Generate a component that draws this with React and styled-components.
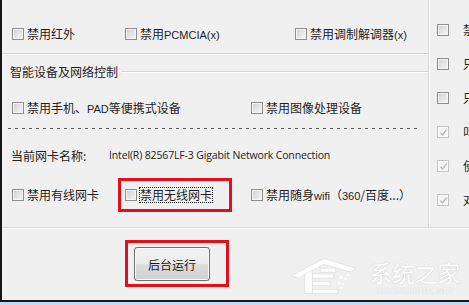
import React from "react";
import styled, { createGlobalStyle } from "styled-components";

const GlobalStyle = createGlobalStyle`
  html, body {
    margin: 0;
    padding: 0;
    background: #f0f0f0;
    overflow: hidden;
  }
  body {
    font-family: "Noto Sans CJK SC", "Liberation Sans", sans-serif;
    font-size: 12px;
    color: #1e1e1e;
  }
`;

const Page = styled.div`
  width: 469px;
  height: 305px;
  display: flex;
  flex-direction: column;
  overflow: hidden;
`;

const Window = styled.div`
  position: relative;
  height: 302px;
  box-sizing: border-box;
  border-left: 2px solid #161616;
  border-bottom: 2px solid #161616;
  background: #f0f0f0;
  display: flex;
  flex-direction: column;
`;

const Taskbar = styled.div`
  height: 3px;
  background: #c6dbf1;
`;

const Main = styled.div`
  display: flex;
  height: 227px;
  border-bottom: 1px solid #d9d9d9;
  box-shadow: 0 1px 0 #ffffff;
`;

const LeftPanel = styled.div`
  width: 426px;
  border-right: 1px solid #d9d9d9;
  box-shadow: 1px 0 0 #ffffff;
  display: flex;
  flex-direction: column;
`;

const RightPanel = styled.div`
  flex: 1;
  padding: 23px 0 0 8px;
  display: flex;
  flex-direction: column;
  gap: 20px;
  white-space: nowrap;
  overflow: hidden;
`;

const Row = styled.div`
  display: grid;
  grid-template-columns: ${(p) => p.$cols};
  align-items: center;
  height: 14px;
  padding-left: 10px;
  margin-top: ${(p) => p.$top}px;
`;

const Etched = styled.div`
  height: 1px;
  background: #d5d5d5;
  border-bottom: 1px solid #ffffff;
  margin-top: ${(p) => p.$top || 0}px;
`;

const GroupHeader = styled.div`
  display: flex;
  align-items: center;
  height: 14px;
  margin-top: 10px;
  padding-left: 8px;
`;

const GroupTitle = styled.span`
  line-height: 14px;
  white-space: nowrap;
`;

const GroupLine = styled.div`
  flex: 1;
  height: 1px;
  margin: -1px 0 0 3px;
  background: #d5d5d5;
  border-bottom: 1px solid #ffffff;
`;

const Dashed = styled.div`
  height: 1px;
  margin: 13px 8px 0 6px;
  background: repeating-linear-gradient(
    to right,
    #5a5a5a 0,
    #5a5a5a 3px,
    transparent 3px,
    transparent 7px
  );
`;

const InfoRow = styled.div`
  display: flex;
  align-items: center;
  height: 14px;
  margin-top: 19px;
  padding-left: 9px;
`;

const InfoLabel = styled.span`
  width: 98px;
  color: #222;
`;

const InfoValue = styled.span`
  font-family: "Open Sans", "Liberation Sans", sans-serif;
  font-size: 10.5px;
  letter-spacing: -0.15px;
  color: #222;
  white-space: nowrap;
`;

const Item = styled.label`
  position: relative;
  display: inline-flex;
  align-items: center;
  gap: ${(p) => p.$gap}px;
  height: 14px;
  white-space: nowrap;
  line-height: 14px;

  ${(p) =>
    p.$marked &&
    `
    &::after {
      content: "";
      position: absolute;
      left: -7px;
      top: -10px;
      width: 108px;
      height: 28px;
      border: 3px solid #e3101b;
    }
  `}
`;

const Box = styled.span`
  flex: none;
  width: 10px;
  height: 10px;
  border: 1px solid ${(p) => (p.$disabled ? "#c4c4c4" : "#8e8e8e")};
  background: ${(p) =>
    p.$disabled
      ? "#f4f4f4"
      : "linear-gradient(135deg, #cfcfcf 0%, #e6e6e6 55%, #f6f6f6 100%)"};
  box-shadow: inset 0 0 0 1px ${(p) => (p.$disabled ? "#fbfbfb" : "#f4f4f4")};
  display: flex;
  align-items: center;
  justify-content: center;
`;

const Text = styled.span`
  outline: ${(p) => (p.$focus ? "1px dotted #202020" : "none")};
  outline-offset: 0;
`;

const Latin = styled.span`
  font-family: "Liberation Sans", sans-serif;
  font-size: 11px;
`;

const Footer = styled.div`
  flex: 1;
  padding: 19px 0 0 132px;
`;

const Marked = styled.div`
  position: relative;
  display: inline-block;

  &::after {
    content: "";
    position: absolute;
    left: -9px;
    top: -7px;
    width: 98px;
    height: 41px;
    border: 3px solid #e3101b;
  }
`;

const Button = styled.button`
  width: 76px;
  height: 34px;
  border: 1px solid #707070;
  border-radius: 3px;
  background: linear-gradient(#f3f3f3 0%, #ececec 48%, #dddddd 52%, #d0d0d0 100%);
  box-shadow: inset 0 0 0 1px #fcfcfc;
  font-family: "Noto Sans CJK SC", sans-serif;
  font-size: 12px;
  color: #1a1a1a;
  padding: 0;
`;

const Watermark = styled.div`
  position: absolute;
  right: 9px;
  bottom: 4px;
  display: flex;
  align-items: flex-end;
  gap: 10px;
  opacity: 0.95;
  pointer-events: none;
`;

const MarkText = styled.div`
  display: flex;
  flex-direction: column;
  align-items: center;
`;

const MarkTitle = styled.span`
  display: block;
  font-size: 23px;
  line-height: 30px;
  height: 30px;
  color: #ffffff;
  letter-spacing: -0.3px;
  text-shadow: 0 0 1px rgba(160, 160, 160, 0.7);
`;

const MarkSub = styled.span`
  display: block;
  font-family: "Liberation Serif", serif;
  font-size: 8px;
  line-height: 9px;
  color: #ffffff;
  letter-spacing: 0.3px;
  text-shadow: 0 0 1px rgba(160, 160, 160, 0.7);
`;

const Check = ({ children, checked, disabled, focus, marked, gap = 3 }) => (
  <Item $marked={marked} $gap={gap}>
    <Box $disabled={disabled}>
      {checked && (
        <svg width="9" height="9" viewBox="0 0 9 9">
          <path d="M1.5 4.8 L3.6 7 L7.6 1.6" fill="none" stroke="#b9b9b9" strokeWidth="1.3" />
        </svg>
      )}
    </Box>
    {children && <Text $focus={focus}>{children}</Text>}
  </Item>
);

const HouseLogo = () => (
  <svg width="68" height="40" viewBox="0 0 70 40">
    <g fill="#ffffff" stroke="rgba(170,170,170,0.45)" strokeWidth="0.5">
      <path d="M0 20 L34 2 L66 12 L62 16 L34 8 L8 22 Z" />
      <path d="M14 18 L22 14 L22 38 L14 38 Z" />
      <path d="M22 18 L44 18 L44 22 L22 22 Z" />
      <path d="M22 26 L40 26 L40 30 L22 30 Z" />
      <path d="M22 34 L48 34 L48 38 L22 38 Z" />
      <path d="M30 12 L46 12 L46 16 L30 16 Z" />
    </g>
    <g fill="#ffffff">
      <rect x="50" y="20" width="3" height="3" />
      <rect x="55" y="22" width="2" height="2" />
      <rect x="48" y="26" width="3" height="3" />
      <rect x="53" y="27" width="2" height="2" />
      <rect x="58" y="18" width="2" height="2" />
      <rect x="51" y="31" width="2" height="2" />
    </g>
  </svg>
);

export default function App() {
  return (
    <>
      <GlobalStyle />
      <Page>
        <Window>
          <Main>
            <LeftPanel>
              <Row $cols="113px 170px auto" $top={27}>
                <Check>禁用红外</Check>
                <Check>
                  禁用<Latin>PCMCIA(x)</Latin>
                </Check>
                <Check>
                  禁用调制解调器<Latin>(x)</Latin>
                </Check>
              </Row>
              <Etched $top={12} />
              <GroupHeader>
                <GroupTitle>智能设备及网络控制</GroupTitle>
                <GroupLine />
              </GroupHeader>
              <Row $cols="239px auto" $top={22}>
                <Check>
                  禁用手机、<Latin>PAD</Latin>等便携式设备
                </Check>
                <Check>禁用图像处理设备</Check>
              </Row>
              <Dashed />
              <InfoRow>
                <InfoLabel>当前网卡名称:</InfoLabel>
                <InfoValue>Intel(R) 82567LF-3 Gigabit Network Connection</InfoValue>
              </InfoRow>
              <Row $cols="113px 126px auto" $top={26}>
                <Check>禁用有线网卡</Check>
                <Check marked focus>
                  禁用无线网卡
                </Check>
                <Check>
                  禁用随身<Latin>wifi</Latin>（<Latin>360</Latin>/百度...）
                </Check>
              </Row>
            </LeftPanel>
            <RightPanel>
              <Check gap={14}>禁用</Check>
              <Check gap={14}>只读</Check>
              <Check gap={14}>只允许</Check>
              <Check gap={14} checked disabled>叫醒</Check>
              <Check gap={14} checked disabled>使用</Check>
              <Check gap={14} checked disabled>对话</Check>
            </RightPanel>
          </Main>
          <Footer>
            <Marked>
              <Button>后台运行</Button>
            </Marked>
          </Footer>
          <Watermark>
            <HouseLogo />
            <MarkText>
              <MarkTitle>系统之家</MarkTitle>
              <MarkSub>XITONGZHIJIA.NET</MarkSub>
            </MarkText>
          </Watermark>
        </Window>
        <Taskbar />
      </Page>
    </>
  );
}
